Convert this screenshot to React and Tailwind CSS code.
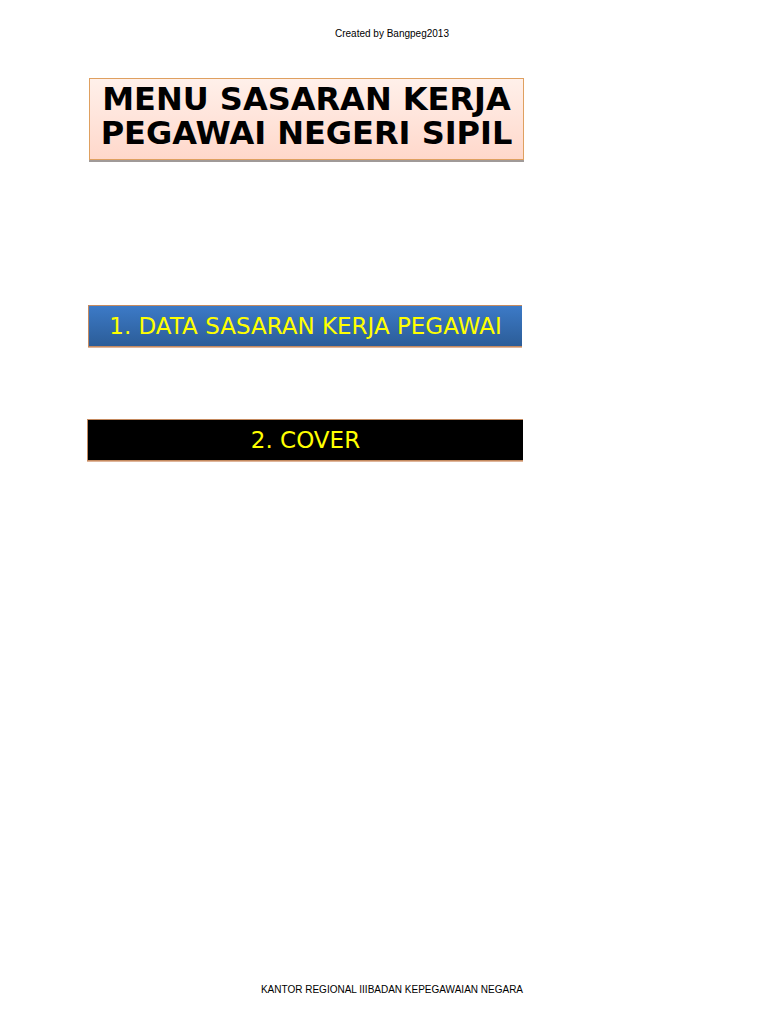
import React from 'react';

const MENU = [
  { id: 'data', label: '1. DATA SASARAN KERJA PEGAWAI', tone: 'ml-[88px] max-w-[434px] bg-linear-to-b from-[#3c7ac7] to-[#2c5d98]' },
  { id: 'cover', label: '2. COVER', tone: 'ml-[87px] max-w-[436px] bg-black' },
];

export default function App() {
  return (
    <div className="flex min-h-screen flex-col bg-white font-['DejaVu_Sans',sans-serif] text-black">
      <header className="pt-7 pl-4 text-center font-['Liberation_Sans',sans-serif] text-[10px] leading-3">
        Created by Bangpeg2013
      </header>

      <main className="flex-1 pt-[38px]">
        <h1 className="ml-[89px] max-w-[435px] border border-[#dfa060] bg-linear-to-b from-[#fff0ea] to-[#ffd8cb] pt-[3px] pb-[9px] text-center text-[32px] leading-[34px] font-bold shadow-[0_2px_0_#a09a98]">
          MENU SASARAN KERJA PEGAWAI NEGERI SIPIL
        </h1>

        <nav className="mt-[145px] flex flex-col gap-[72px]">
          {MENU.map((item) => (
            <button
              key={item.id}
              type="button"
              className={`h-[42px] border-y border-l border-[#c48a60] text-center text-[23px] leading-7 text-[#ffff00] shadow-[0_1px_0_#dfb59a] ${item.tone}`}
            >
              {item.label}
            </button>
          ))}
        </nav>
      </main>

      <footer className="pb-7 pl-4 text-center font-['Liberation_Sans',sans-serif] text-[10px] leading-3">
        KANTOR REGIONAL IIIBADAN KEPEGAWAIAN NEGARA
      </footer>
    </div>
  );
}
